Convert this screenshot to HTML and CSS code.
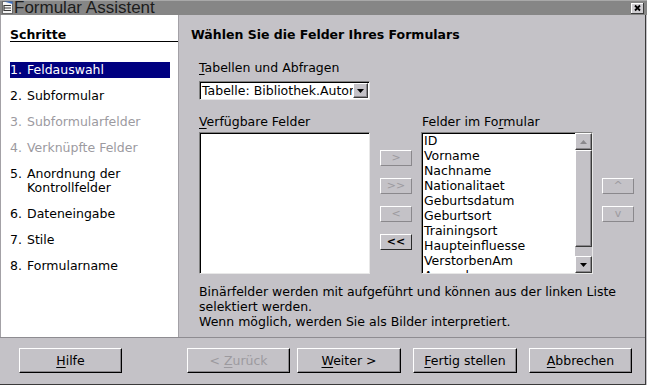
FILE: index.html
```html
<!DOCTYPE html>
<html lang="de">
<head>
<meta charset="utf-8">
<title>Formular Assistent</title>
<link rel="stylesheet" href="styles.css">
</head>
<body>
<div class="titlebar">
  <svg class="appicon" width="13" height="14" viewBox="0 0 13 14">
    <rect x="1.5" y="1.5" width="10" height="12" fill="#f4f4f4" stroke="#6a6a6a"/>
    <path d="M3 1.5 L11.5 1.5 L11.5 4 Z" fill="#3d6fc2"/>
    <path d="M3 5.5h7M3 8h7M3 10.5h7" stroke="#3a3a3a" stroke-width="1"/>
    <path d="M3 5v6" stroke="#3a3a3a" stroke-width="1.2"/>
  </svg>
  <span class="title">Formular Assistent</span>
  <svg class="closebtn" width="13" height="11" viewBox="0 0 13 11">
    <rect x="0" y="0" width="13" height="11" fill="#3c3c3c"/>
    <rect x="0" y="0" width="12" height="10" fill="#ffffff"/>
    <rect x="1" y="1" width="11" height="9" fill="#cfcdd1"/>
    <path d="M4 2.5 L9 7.5 M9 2.5 L4 7.5" stroke="#000" stroke-width="1.8"/>
  </svg>
</div>
<div class="frame">
  <div class="main">
    <div class="steps">
      <div class="steps-head">Schritte</div>
      <ol class="step-list">
        <li class="step active"><span class="num">1.</span><span>Feldauswahl</span></li>
        <li class="step"><span class="num">2.</span><span>Subformular</span></li>
        <li class="step off"><span class="num">3.</span><span>Subformularfelder</span></li>
        <li class="step off"><span class="num">4.</span><span>Verknüpfte Felder</span></li>
        <li class="step"><span class="num">5.</span><span>Anordnung der<br>Kontrollfelder</span></li>
        <li class="step"><span class="num">6.</span><span>Dateneingabe</span></li>
        <li class="step"><span class="num">7.</span><span>Stile</span></li>
        <li class="step"><span class="num">8.</span><span>Formularname</span></li>
      </ol>
    </div>
    <div class="content">
      <h1 class="heading">Wählen Sie die Felder Ihres Formulars</h1>
      <div class="form">
        <div class="label"><u>T</u>abellen und Abfragen</div>
        <div class="combo">
          <span class="combo-text">Tabelle: Bibliothek.Autoren</span>
          <span class="combo-btn">
            <svg width="7" height="4" viewBox="0 0 7 4"><path d="M0 0h7L3.5 4Z" fill="#000"/></svg>
          </span>
        </div>
        <div class="lists">
          <div class="col list-col">
            <div class="label"><u>V</u>erfügbare Felder</div>
            <div class="listbox"></div>
          </div>
          <div class="col btn-col first">
            <button class="sbtn dis">&gt;</button>
            <button class="sbtn dis">&gt;&gt;</button>
            <button class="sbtn dis">&lt;</button>
            <button class="sbtn strong">&lt;&lt;</button>
          </div>
          <div class="col list-col wide">
            <div class="label indent">Felder im Fo<u>r</u>mular</div>
            <div class="listbox filled">
              <ul class="items">
                <li>ID</li>
                <li>Vorname</li>
                <li>Nachname</li>
                <li>Nationalitaet</li>
                <li>Geburtsdatum</li>
                <li>Geburtsort</li>
                <li>Trainingsort</li>
                <li>Haupteinfluesse</li>
                <li>VerstorbenAm</li>
                <li>Anmerkungen</li>
              </ul>
              <div class="scrollbar">
                <div class="sb-btn">
                  <svg width="7" height="4" viewBox="0 0 7 4"><path d="M0 4h7L3.5 0Z" fill="#8a888c"/></svg>
                </div>
                <div class="sb-thumb"></div>
                <div class="sb-track"></div>
                <div class="sb-btn">
                  <svg width="7" height="4" viewBox="0 0 7 4"><path d="M0 0h7L3.5 4Z" fill="#000"/></svg>
                </div>
              </div>
            </div>
          </div>
          <div class="col btn-col second">
            <button class="sbtn dis">^</button>
            <button class="sbtn dis">v</button>
          </div>
        </div>
        <p class="info">Binärfelder werden mit aufgeführt und können aus der linken Liste<br>selektiert werden.<br>Wenn möglich, werden Sie als Bilder interpretiert.</p>
      </div>
    </div>
  </div>
  <div class="footer">
    <button class="btn help"><u>H</u>ilfe</button>
    <button class="btn back dis">&lt; <u>Z</u>urück</button>
    <button class="btn next"><u>W</u>eiter &gt;</button>
    <button class="btn finish"><u>F</u>ertig stellen</button>
    <button class="btn cancel"><u>A</u>bbrechen</button>
  </div>
</div>
</body>
</html>
```
FILE: styles.css
```css
html, body {
  margin: 0;
  padding: 0;
}
body {
  width: 647px;
  height: 385px;
  overflow: hidden;
  background: #c4c2c7;
  font-family: "DejaVu Sans", "Noto Sans", sans-serif;
  font-size: 12.5px;
  color: #000;
}
u {
  text-decoration: underline;
  text-underline-offset: 2px;
}

/* title bar */
.titlebar {
  height: 15px;
  background: #868686;
  border-top: 1px solid #a9a9a9;
  box-sizing: border-box;
  display: flex;
  align-items: flex-start;
  overflow: hidden;
}
.appicon {
  flex: none;
  margin-left: 1px;
  margin-top: -1px;
}
.title {
  font-family: Arial, "Liberation Sans", sans-serif;
  font-size: 17px;
  line-height: 14px;
  color: #1c1c1c;
  white-space: nowrap;
}
.closebtn {
  flex: none;
  margin-left: auto;
  margin-right: 3px;
  margin-top: 2px;
}

/* frame */
.frame {
  width: 646px;
  height: 370px;
  box-sizing: border-box;
  border-right: 1px solid #3a3a3a;
  border-bottom: 1px solid #3a3a3a;
}
.main {
  display: flex;
  height: 322px;
}

/* steps */
.steps {
  width: 179px;
  flex: none;
  box-sizing: border-box;
  background: #fff;
  border-left: 1px solid #a3a1a6;
  border-right: 1px solid #a3a1a6;
}
.steps-head {
  margin-left: 9px;
  padding-top: 13px;
  line-height: 13px;
  font-weight: bold;
  border-bottom: 1px solid #000;
}
.step-list {
  list-style: none;
  margin: 20px 0 0 9px;
  padding: 0;
  width: 160px;
}
.step {
  display: flex;
  line-height: 14px;
  padding: 1px 0;
  margin-bottom: 10px;
  white-space: nowrap;
}
.step .num {
  width: 17px;
  flex: none;
}
.step.active {
  background: #000080;
  color: #fff;
}
.step.off {
  color: #9c9a9f;
}

/* content */
.content {
  flex: 1;
  padding-left: 12px;
}
.heading {
  margin: 0;
  padding-top: 13px;
  font-size: 12.5px;
  line-height: 14px;
  font-weight: bold;
}
.form {
  margin-left: 8px;
}
.label {
  line-height: 14px;
  white-space: nowrap;
}
.form > .label {
  margin-top: 19px;
}
.label.indent {
  padding-left: 1px;
}
.combo {
  margin-top: 6px;
  width: 171px;
  height: 19px;
  box-sizing: border-box;
  display: flex;
  padding: 1px;
  background: #fff;
  border: 1px solid;
  border-color: #808080 #e8e8e8 #e8e8e8 #808080;
  box-shadow: inset 1px 1px 0 #000;
}
.combo-text {
  flex: 1;
  overflow: hidden;
  white-space: nowrap;
  padding-left: 1px;
  line-height: 15px;
}
.combo-btn {
  flex: none;
  width: 15px;
  height: 15px;
  box-sizing: border-box;
  background: #c4c2c7;
  border: 1px solid;
  border-color: #fff #3a3a3a #3a3a3a #fff;
  box-shadow: inset -1px -1px 0 #8a888c;
  display: flex;
  align-items: center;
  justify-content: center;
}

.lists {
  display: flex;
  margin-top: 15px;
}
.col {
  display: flex;
  flex-direction: column;
}
.list-col {
  width: 171px;
}
.list-col.wide {
  width: 172px;
  margin-left: 9px;
}
.listbox {
  margin-top: 3px;
  height: 142px;
  box-sizing: border-box;
  background: #fff;
  border: 1px solid;
  border-color: #808080 #e8e8e8 #e8e8e8 #808080;
  box-shadow: inset 1px 1px 0 #000;
  display: flex;
  overflow: hidden;
}
.items {
  flex: 1;
  list-style: none;
  margin: 0;
  padding: 0 0 0 2px;
  overflow: hidden;
}
.items li {
  line-height: 15px;
  white-space: nowrap;
}
.scrollbar {
  flex: none;
  width: 17px;
  display: flex;
  flex-direction: column;
  background: #c4c2c7;
}
.sb-btn, .sb-thumb {
  box-sizing: border-box;
  background: #c4c2c7;
  border: 1px solid;
  border-color: #fff #3a3a3a #3a3a3a #fff;
  box-shadow: inset -1px -1px 0 #8a888c;
}
.sb-btn {
  height: 17px;
  display: flex;
  align-items: center;
  justify-content: center;
}
.sb-thumb {
  height: 97px;
}
.sb-track {
  height: 9px;
}

.btn-col {
  width: 32px;
  gap: 12px;
}
.btn-col.first {
  margin-left: 10px;
  padding-top: 35px;
}
.btn-col.second {
  margin-left: 9px;
  padding-top: 63px;
}
.sbtn {
  width: 32px;
  height: 16px;
  box-sizing: border-box;
  padding: 0;
  margin: 0;
  background: #c4c2c7;
  border: 1px solid;
  border-color: #fff #8a888c #8a888c #fff;
  font-family: "DejaVu Sans", sans-serif;
  font-size: 11px;
  line-height: 12px;
  color: #000;
}
.sbtn.dis {
  color: #9c9a9f;
}
.sbtn.strong {
  border-color: #fff #2a2a2a #2a2a2a #fff;
  font-weight: bold;
}

.info {
  margin: 10px 0 0 0;
  line-height: 15px;
  white-space: nowrap;
}

/* footer */
.footer {
  height: 46px;
  box-sizing: border-box;
  border-top: 1px solid #8e8c91;
  padding-top: 10px;
  display: flex;
  align-items: flex-start;
}
.btn {
  height: 25px;
  width: 103px;
  box-sizing: border-box;
  padding: 0;
  margin: 0;
  background: #c4c2c7;
  border: 1px solid;
  border-color: #fff #000 #000 #fff;
  box-shadow: inset -1px -1px 0 #8a888c;
  font-family: "DejaVu Sans", sans-serif;
  font-size: 12.5px;
  color: #000;
  flex: none;
}
.btn.dis {
  color: #9c9a9f;
}
.btn.help { margin-left: 19px; }
.btn.back { margin-left: 65px; }
.btn.next { margin-left: 7px; width: 104px; }
.btn.finish { margin-left: 12px; width: 104px; }
.btn.cancel { margin-left: 12px; }
```
